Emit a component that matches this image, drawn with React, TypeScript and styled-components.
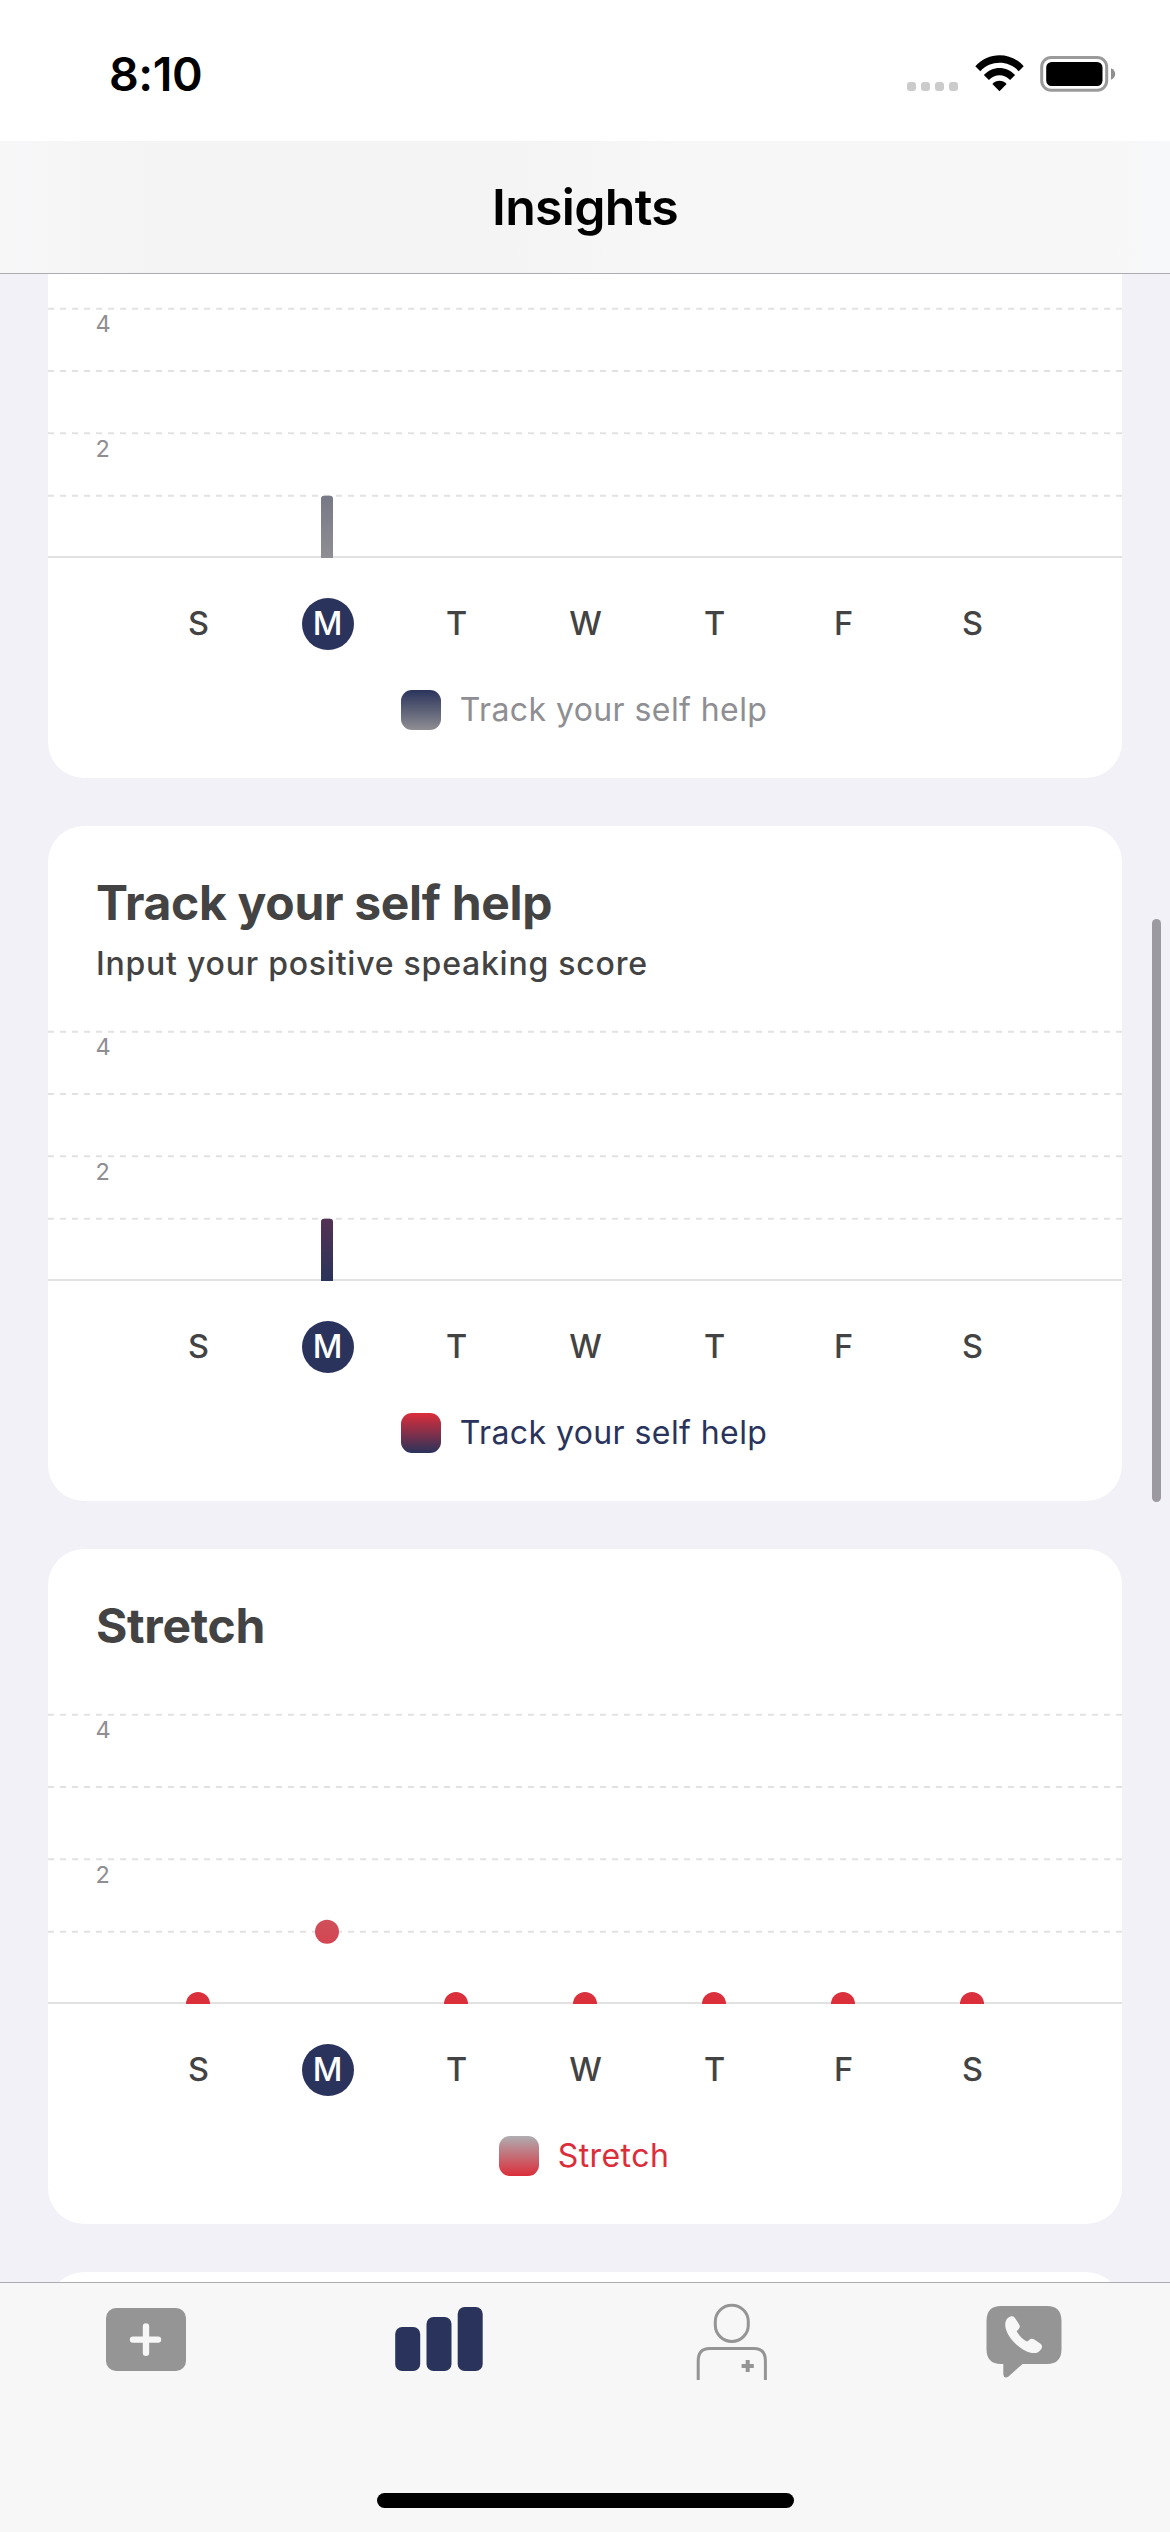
import React from "react";
import styled, { createGlobalStyle } from "styled-components";

const NAVY = "#2a335b";
const RED = "#dc2d3a";
const GREY = "#8e8e93";
const INK = "#434343";
const TAB_GREY = "#959595";

const GlobalStyle = createGlobalStyle`
  html, body { margin: 0; padding: 0; background: #f2f1f7; }
  * { box-sizing: border-box; }
`;

const Screen = styled.div`
  position: relative;
  display: flex;
  flex-direction: column;
  width: 1170px;
  height: 2532px;
  overflow: hidden;
  background: #f2f1f7;
  font-family: Inter, "Liberation Sans", sans-serif;
  color: ${INK};
`;

const StatusBar = styled.header`
  flex: none;
  display: flex;
  align-items: flex-start;
  justify-content: space-between;
  height: 141px;
  padding: 55px 54px 0 109px;
  background: #fff;
`;

const Clock = styled.span`
  margin-top: -1px;
  font-size: 46.5px;
  line-height: 40px;
  font-weight: 600;
  letter-spacing: -0.4px;
  color: #000;
`;

const StatusIcons = styled.div`
  display: flex;
  align-items: flex-start;
  gap: 16px;
`;

const SignalDots = styled.div`
  display: flex;
  gap: 5px;
  padding: 27px 1px 0 0;
`;

const SignalDot = styled.i`
  width: 9px;
  height: 9px;
  border-radius: 3px;
  background: #cbcbcb;
`;

const NavBar = styled.nav`
  flex: none;
  display: flex;
  align-items: center;
  justify-content: center;
  height: 133px;
  border-bottom: 1px solid #acacb0;
  background: linear-gradient(90deg, #f7f7f7 0, #f7f7f9 24px, #f6f6f6 60px, #f4f4f4 170px, #f4f4f4 500px, #f7f7f7 680px, #f7f7f7 1100px, #f7f8fa 1170px);
`;

const NavTitle = styled.h1`
  margin: 0;
  font-size: 50px;
  line-height: 60px;
  font-weight: 600;
  letter-spacing: -0.7px;
  color: #000;
`;

const Feed = styled.main`
  flex: 1;
  min-height: 0;
  display: flex;
  flex-direction: column;
  gap: 48px;
  padding: 0 48px;
  overflow: hidden;
`;

const Card = styled.section<{ $scrolled?: number }>`
  flex: none;
  display: flex;
  flex-direction: column;
  height: 675px;
  margin-top: ${(p) => -(p.$scrolled ?? 0)}px;
  padding: 48px 0;
  border-radius: 36px;
  background: #fff;
`;

const CardTitle = styled.h2`
  margin: 0;
  padding: 0 48px;
  font-size: 48px;
  line-height: 58px;
  font-weight: 700;
  letter-spacing: -0.32px;
`;

const CardSubtitle = styled.p`
  margin: 12px 0 0;
  padding: 0 48px;
  font-size: 32px;
  line-height: 40px;
  font-weight: 500;
  letter-spacing: 0.77px;
`;

const ChartSvg = styled.svg`
  display: block;
  flex: none;
  margin-top: auto;
`;

const AxisLabel = styled.text`
  font-family: Inter, "Liberation Sans", sans-serif;
  font-size: 23.5px;
  fill: ${GREY};
`;

const Days = styled.div`
  display: grid;
  grid-template-columns: repeat(7, 129px);
  justify-items: center;
  margin-top: 40px;
  padding-left: 86px;
`;

const Day = styled.span<{ $today: boolean }>`
  display: flex;
  align-items: center;
  justify-content: center;
  width: 52px;
  height: 52px;
  padding-bottom: 1px;
  border-radius: 50%;
  font-size: 32.5px;
  font-weight: 500;
  color: ${(p) => (p.$today ? "#fff" : INK)};
  background: ${(p) => (p.$today ? NAVY : "transparent")};
`;

const Legend = styled.div`
  display: flex;
  align-items: center;
  justify-content: center;
  gap: 19px;
  height: 40px;
  margin-top: 40px;
  padding-right: 2px;
`;

const Swatch = styled.i<{ $from: string; $to: string }>`
  width: 40px;
  height: 40px;
  border-radius: 11px;
  background: linear-gradient(${(p) => p.$from}, ${(p) => p.$to});
`;

const LegendLabel = styled.span<{ $color: string }>`
  font-size: 32px;
  line-height: 40px;
  letter-spacing: 0.42px;
  color: ${(p) => p.$color};
`;

const TabBar = styled.footer`
  flex: none;
  display: flex;
  flex-direction: column;
  justify-content: space-between;
  align-items: center;
  height: 250px;
  padding-bottom: 24px;
  border-top: 1px solid #acacb0;
  background: #f7f7f7;
`;

const Tabs = styled.div`
  display: grid;
  grid-template-columns: repeat(4, 1fr);
  justify-items: center;
  width: 100%;
  padding-top: 17px;
`;

const HomeIndicator = styled.div`
  width: 417px;
  height: 15px;
  border-radius: 8px;
  background: #000;
`;

const ScrollThumb = styled.div`
  position: absolute;
  top: 919px;
  right: 9px;
  width: 9px;
  height: 583px;
  border-radius: 5px;
  background: #9c9aa0;
`;

const DAY_NAMES = ["S", "M", "T", "W", "T", "F", "S"];

type Kind = "bar" | "dot";

interface ChartProps {
  id: string;
  kind: Kind;
  values: number[];
  step: number;
  height: number;
  from: string;
  to: string;
}

function Chart({ id, kind, values, step, height, from, to }: ChartProps) {
  const yOf = (v: number) => height - v * step;
  return (
    <ChartSvg width={1074} height={height} viewBox={`0 0 1074 ${height}`}>
      <defs>
        <linearGradient id={id} gradientUnits="userSpaceOnUse" x1="0" y1={yOf(4.3)} x2="0" y2={height}>
          <stop offset="0" stopColor={from} />
          <stop offset="1" stopColor={to} />
        </linearGradient>
      </defs>
      {[4, 3, 2, 1].map((v) => (
        <line key={v} x1="0" x2="1074" y1={yOf(v)} y2={yOf(v)} stroke="#e2e2e2" strokeWidth="2" strokeDasharray="6 6" />
      ))}
      {[4, 2].map((v) => (
        <AxisLabel key={v} x="47.5" y={yOf(v) + 23.6}>{v}</AxisLabel>
      ))}
      <line x1="0" x2="1074" y1={height - 1} y2={height - 1} stroke="#e2e2e2" strokeWidth="2" />
      {values.map((v, i) => {
        const x = 150 + i * 129;
        if (kind === "dot") return <circle key={i} cx={x} cy={yOf(v)} r="12" fill={`url(#${id})`} />;
        if (!v) return null;
        const top = yOf(v);
        return (
          <path
            key={i}
            d={`M${x - 6} ${height}V${top + 3}q0 -3 3 -3h6q3 0 3 3V${height}z`}
            fill={`url(#${id})`}
          />
        );
      })}
    </ChartSvg>
  );
}

interface InsightProps extends ChartProps {
  title?: string;
  subtitle?: string;
  label: string;
  scrolled?: number;
}

function InsightCard({ title, subtitle, label, scrolled, ...chart }: InsightProps) {
  return (
    <Card $scrolled={scrolled}>
      {title && <CardTitle>{title}</CardTitle>}
      {subtitle && <CardSubtitle>{subtitle}</CardSubtitle>}
      <Chart {...chart} />
      <Days>
        {DAY_NAMES.map((d, i) => (
          <Day key={i} $today={i === 1}>{d}</Day>
        ))}
      </Days>
      <Legend>
        <Swatch $from={chart.from} $to={chart.to} />
        <LegendLabel $color={chart.to}>{label}</LegendLabel>
      </Legend>
    </Card>
  );
}

const WifiIcon = () => (
  <svg width="49" height="37" viewBox="0 0 49 37">
    <path d="M0.3 11.2C13.5 -3.5 35.5 -3.5 48.7 11.2L43.7 16.2C33.5 5 15.5 5 5.3 16.2Z" />
    <path d="M8.9 20.1C17.5 10.7 31.5 10.7 40.1 20.1L35.1 25.1C29.3 18.7 19.7 18.7 13.9 25.1Z" />
    <path d="M17.4 28.9C21.3 24.6 27.7 24.6 31.6 28.9L24.5 36.2Z" />
  </svg>
);

const BatteryIcon = () => (
  <svg width="76" height="37" viewBox="0 0 76 37">
    <rect x="1.7" y="2.5" width="65" height="32.8" rx="9.5" fill="none" stroke="#9a9a9a" strokeWidth="3" />
    <rect x="6.2" y="7" width="56.3" height="24" rx="5.5" />
    <path d="M71 13.2C76.6 15.5 76.6 22.5 71 24.7Z" fill="#8f8f8f" />
  </svg>
);

const AddIcon = () => (
  <svg width="82" height="84" viewBox="0 0 82 84">
    <rect x="1" y="8" width="80" height="63" rx="10" fill={TAB_GREY} />
    <path d="M28 39.6H53M41 26.4V52.8" fill="none" stroke="#f7f7f7" strokeWidth="6.4" strokeLinecap="round" />
  </svg>
);

const InsightsIcon = () => (
  <svg width="89" height="84" viewBox="0 0 89 84" fill={NAVY}>
    <rect x="1.2" y="27" width="25" height="44" rx="7" />
    <rect x="32.5" y="17" width="25" height="54" rx="7" />
    <rect x="63.7" y="7" width="25" height="64" rx="7" />
  </svg>
);

const PersonIcon = () => (
  <svg width="72" height="84" viewBox="0 0 72 84" fill="none" stroke={TAB_GREY} strokeWidth="3">
    <rect x="20.3" y="5.2" width="33" height="36.3" rx="16.5" />
    <path d="M3.2 80V61Q3.2 48.5 14.5 48.5H59.1Q70.4 48.5 70.4 61V80" />
    <path d="M46.6 66H58.8M52.7 59.9V72.1" strokeWidth="4" />
  </svg>
);

const CallIcon = () => (
  <svg width="76" height="84" viewBox="0 0 76 84">
    <path
      fill={TAB_GREY}
      d="M15 6H61Q75.5 6 75.5 21V49Q75.5 64 61 64H36.5L22.5 76.5Q18 79 17.3 74.5V64H15Q0.5 64 0.5 49V21Q0.5 6 15 6Z"
    />
    <path
      fill="#f7f7f7"
      d="M24.5 16.4C27 15.9 28.2 16.7 29.5 18.7L33.3 24.7C34.2 26.3 33.9 27.6 32.7 28.9L30.7 31.2C32.6 35.3 37 39.6 41.2 41.6L43.4 39.7C44.8 38.4 46.6 38.4 48.3 39.5L54.2 43.5C56.2 44.9 56.5 46.9 55.3 48.9C52.8 52.7 49.4 53.8 44.5 52.7C33 49.9 20.5 36.5 19.3 26.2C18.9 21.3 20.6 17.5 24.5 16.4Z"
    />
  </svg>
);

export default function App() {
  return (
    <>
      <GlobalStyle />
      <Screen>
        <StatusBar>
          <Clock>8:10</Clock>
          <StatusIcons>
            <SignalDots>
              <SignalDot />
              <SignalDot />
              <SignalDot />
              <SignalDot />
            </SignalDots>
            <WifiIcon />
            <BatteryIcon />
          </StatusIcons>
        </StatusBar>
        <NavBar>
          <NavTitle>Insights</NavTitle>
        </NavBar>
        <Feed>
          <InsightCard
            scrolled={171}
            id="grey-bars"
            kind="bar"
            values={[0, 1, 0, 0, 0, 0, 0]}
            step={62.33}
            height={272}
            from={NAVY}
            to={GREY}
            label="Track your self help"
          />
          <InsightCard
            id="navy-bars"
            kind="bar"
            values={[0, 1, 0, 0, 0, 0, 0]}
            step={62.33}
            height={272}
            from={RED}
            to={NAVY}
            title="Track your self help"
            subtitle="Input your positive speaking score"
            label="Track your self help"
          />
          <InsightCard
            id="red-dots"
            kind="dot"
            values={[0, 1, 0, 0, 0, 0, 0]}
            step={72.33}
            height={312}
            from="#aeaeb2"
            to={RED}
            title="Stretch"
            label="Stretch"
          />
          <Card />
        </Feed>
        <TabBar>
          <Tabs>
            <AddIcon />
            <InsightsIcon />
            <PersonIcon />
            <CallIcon />
          </Tabs>
          <HomeIndicator />
        </TabBar>
        <ScrollThumb />
      </Screen>
    </>
  );
}
